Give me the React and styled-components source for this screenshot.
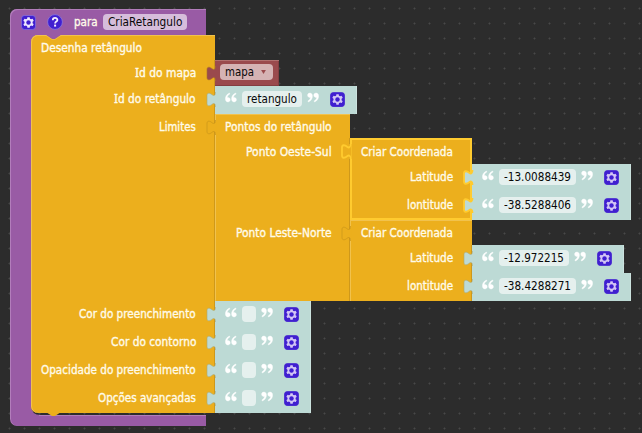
import React, { useLayoutEffect, useRef, useState } from "react";
import styled, { createGlobalStyle, css } from "styled-components";

const PURPLE = "#995ba5";
const AMBER = "#ecaf1d";
const RED = "#9a4a4d";
const MINT = "#bddad5";
const DARK = "#2c2c2c";
const SELECT = "#ffcb2f";

const GlobalStyle = createGlobalStyle`
  body {
    margin: 0;
    overflow: hidden;
    background: ${DARK};
  }
`;

const Workspace = styled.main`
  box-sizing: border-box;
  width: 642px;
  height: 433px;
  padding: 9px 0 0 10px;
  overflow: hidden;
  font: 12.5px/26px "DejaVu Sans Condensed", "DejaVu Sans", sans-serif;
  font-stretch: condensed;
  background: radial-gradient(circle at 9.5px 8.5px, #484848 0.8px, transparent 1.2px) 0 0 / 15px 15px ${DARK};
`;

const Procedure = styled.section`
  display: flex;
  flex-direction: column;
  align-items: flex-start;
`;

const ProcedureHeader = styled.header`
  box-sizing: border-box;
  display: flex;
  align-items: center;
  width: 196px;
  height: 26px;
  padding-left: 11px;
  background: ${PURPLE};
  border-top-left-radius: 7px;
  box-shadow: inset 1px 1px 0 #b27dbb;
`;

const ProcedureBody = styled.div`
  display: flex;
  height: 380px;
`;

const ProcedureArm = styled.div`
  width: 21px;
  background: ${PURPLE};
  box-shadow: inset 1px 0 0 #b27dbb;
`;

const Statement = styled.div`
  position: relative;
  isolation: isolate;
`;

const Notch = styled.svg`
  position: absolute;
  left: 15px;
  ${(p) => (p.$bottom ? "top: 377px;" : "top: 0;")}
  z-index: 1;
`;

const Fillet = styled.svg`
  position: absolute;
  left: 0;
  z-index: -1;
  ${(p) => (p.$bottom ? "bottom: 0;" : "top: 0;")}
`;

const ProcedureFooter = styled.div`
  box-sizing: border-box;
  width: 196px;
  height: 11px;
  background: linear-gradient(#b27dbb, #b27dbb) 29px 0 / 167px 1px no-repeat ${PURPLE};
  border-bottom-left-radius: 7px;
  box-shadow: inset 1px 0 0 #b27dbb;
`;

const TextBox = styled.span`
  display: inline-block;
  width: ${(p) => p.$width}px;
  text-align: left;
  white-space: pre;
  ${(p) => p.$light && "color: #fffbe9; -webkit-text-stroke: 0.35px #fffbe9;"}
`;

const TextRun = styled.span`
  display: inline-block;
  transform-origin: 0 50%;
`;

const SerifCapital = styled.span`
  font-family: "Noto Sans", sans-serif;
  line-height: 1;
`;

const Block = styled.div`
  position: relative;
  display: flex;
  flex-direction: column;
  align-items: flex-start;
`;

const BlockTitle = styled.div`
  box-sizing: border-box;
  width: ${(p) => p.$width}px;
  height: ${(p) => p.$height}px;
  padding: ${(p) => p.$drop ?? 0}px 0 0 ${(p) => p.$indent ?? 10}px;
  background: ${AMBER};
  box-shadow: inset 0 1px 0 #f1c24d, inset 1px 0 0 #f1c24d;
  ${(p) => p.$rounded && "border-top-left-radius: 7px;"}
`;

const InputRow = styled.div`
  display: flex;
`;

const InputLabel = styled.div`
  box-sizing: border-box;
  width: ${(p) => p.$width}px;
  padding: ${(p) => p.$drop ?? 0}px ${(p) => p.$inset ?? 19}px 0 0;
  text-align: right;
  background: ${AMBER};
  box-shadow: inset 1px 0 0 #f1c24d, inset -1px 0 0 #ce981b;
  ${(p) => p.$last && "border-bottom-left-radius: 7px;"}
`;

const Outline = styled.div`
  position: absolute;
  top: 0;
  left: 0;
  width: 122px;
  height: 82px;
  box-sizing: border-box;
  border: 2px solid ${SELECT};
  pointer-events: none;
`;

const TabShape = styled.svg`
  position: absolute;
  left: -9px;
  top: -1px;
  z-index: 2;
`;

const ValueBlock = styled.div`
  position: relative;
  box-sizing: border-box;
  display: flex;
  align-items: center;
  height: ${(p) => p.$height ?? 28}px;
  padding: 0 ${(p) => p.$end ?? 12}px 2px ${(p) => p.$start ?? 10}px;
  background: ${(p) => p.$color};
  ${(p) =>
    p.$color === RED
      ? css`box-shadow: inset 0 1px 0 #b0706f, inset -1px -1px 0 #843e41;`
      : css`box-shadow: inset -1px 0 0 #cbe2de;`}
`;

const Field = styled.span`
  box-sizing: border-box;
  display: flex;
  align-items: center;
  width: ${(p) => p.$width}px;
  height: 16px;
  padding-left: 5px;
  margin: 0 ${(p) => p.$gap ?? 5}px;
  line-height: 16px;
  color: #080808;
  background: ${(p) => p.$tint ?? "#e5f0ee"};
  border-radius: 4px;
`;

const Caret = styled.svg`
  margin-left: auto;
  margin-right: 7px;
`;

const HeaderWord = styled.div`
  margin: 0 5px 0 11px;
`;

const IconSlot = styled.span`
  display: flex;
  margin-left: ${(p) => p.$gap ?? 0}px;
`;

// Squeezes a run of text horizontally so that it fills its slot exactly.
function Text({ width, light, children }) {
  const ref = useRef(null);
  const [scale, setScale] = useState(1);
  useLayoutEffect(() => {
    const natural = ref.current.offsetWidth;
    if (natural) setScale(width / natural);
  }, [width, children]);
  const capital = children.startsWith("I");
  return (
    <TextBox $width={width} $light={light}>
      <TextRun ref={ref} style={{ transform: `scaleX(${scale})` }}>
        {capital && <SerifCapital>I</SerifCapital>}
        {capital ? children.slice(1) : children}
      </TextRun>
    </TextBox>
  );
}

const TAB = "M9.500 7C9.500 10.500 8 11.200 6.200 9.800 3.600 7.600 1 7.600 1 10.500v8C1 21.400 3.600 21.400 6.200 19.200 8 17.800 9.500 18.500 9.500 22";

function Tab({ fill, edge = "#c3901b", selected }) {
  return (
    <TabShape width="11" height="24" viewBox="0 0 11 24">
      <path d={`${TAB}h1V7z`} fill={fill} />
      <path d={TAB} fill="none" stroke={selected ? SELECT : edge} strokeWidth={selected ? 1.8 : 0.6} />
    </TabShape>
  );
}

function Gear({ edge, tint = "#d3c6f5" }) {
  return (
    <svg width="15" height="15" viewBox="0 0 16 16">
      <rect x=".4" y=".4" width="15.2" height="15.2" rx="3.6" fill="#401fd0" stroke={edge ?? "#401fd0"} strokeWidth=".8" />
      <g transform="translate(8 8) scale(1.12) translate(-8 -8)">
        <path
          d="m4.203 7.296 0 1.368-.92.677-.11.41.9 1.559.41.11 1.043-.457 1.187.683.127 1.134.3.3 1.8 0 .3-.299.127-1.138 1.185-.682 1.046.458.409-.11.9-1.559-.11-.41-.92-.677 0-1.366.92-.677.11-.41-.9-1.559-.409-.109-1.046.458-1.185-.682-.127-1.138-.3-.299-1.8 0-.3.3-.126 1.135-1.187.682-1.043-.457-.41.11-.899 1.559.108.409z"
          fill={tint}
        />
        <circle cx="8" cy="8" r="2.1" fill="#401fd0" />
      </g>
    </svg>
  );
}

function Help() {
  return (
    <svg width="16" height="16" viewBox="0 0 16 16">
      <circle cx="8" cy="8" r="7.4" fill="#401fd0" stroke="#8b78dd" strokeWidth=".8" />
      <path d="M5.8 6.3c0-3.2 4.6-2.9 4.6-.4 0 1.7-2.3 1.6-2.3 3.5" fill="none" stroke="#f4efff" strokeWidth="1.8" />
      <rect x="7.1" y="10.6" width="2" height="2" fill="#f4efff" />
    </svg>
  );
}

function Quote({ close }) {
  return (
    <svg width="12" height="16" viewBox="0 0 12 16">
      <g fill="#fff" stroke="#fff" strokeWidth=".4" transform={close ? "rotate(180 6 6.5)" : undefined}>
        <path d="M4.6 2C1.8 3 .2 5.4 .4 8.3c.1 1.6 1.1 2.6 2.5 2.6 1.3 0 2.3-.9 2.3-2.2S4.2 6.5 2.9 6.5c-.3 0-.5.1-.7.2.2-1.5 1-2.7 2.6-3.6z" />
        <path d="M10.8 2C8 3 6.4 5.4 6.6 8.3c.1 1.6 1.1 2.6 2.5 2.6 1.3 0 2.3-.9 2.3-2.2s-1-2.2-2.3-2.2c-.3 0-.5.1-.7.2.2-1.5 1-2.7 2.6-3.6z" />
      </g>
    </svg>
  );
}

function TextValue({ value, width = 14, selected }) {
  return (
    <ValueBlock $color={MINT}>
      <Tab fill={MINT} edge="#a8aa79" selected={selected} />
      <Quote />
      <Field $width={width}>{value && <Text width={width - 10}>{value}</Text>}</Field>
      <Quote close />
      <IconSlot $gap={11}>
        <Gear />
      </IconSlot>
    </ValueBlock>
  );
}

function Input({ label, textWidth, width, inset, drop, last, children }) {
  return (
    <InputRow>
      <InputLabel $width={width} $inset={inset} $drop={drop} $last={last}>
        <Text light width={textWidth}>
          {label}
        </Text>
      </InputLabel>
      {children}
    </InputRow>
  );
}

function Coordinate({ titleHeight, drop, latitude, longitude, latWidth, selected }) {
  return (
    <Block>
      <BlockTitle $width={122} $height={titleHeight} $indent={11} $drop={drop}>
        <Text light width={92}>
          Criar Coordenada
        </Text>
      </BlockTitle>
      <Input label="Latitude" textWidth={43} width={122}>
        <TextValue value={latitude} width={latWidth} selected={selected} />
      </Input>
      <Input label="lontitude" textWidth={46} width={122}>
        <TextValue value={longitude} width={77} selected={selected} />
      </Input>
      {selected && <Outline />}
      <Tab fill={AMBER} selected={selected} />
    </Block>
  );
}

const OPTIONS = [
  { label: "Cor do preenchimento", textWidth: 117 },
  { label: "Cor do contorno", textWidth: 85 },
  { label: "Opacidade do preenchimento", textWidth: 155 },
  { label: "Opções avançadas", textWidth: 98 },
];

export default function App() {
  return (
    <Workspace>
      <GlobalStyle />
      <Procedure>
        <ProcedureHeader>
          <Gear edge="#8b78dd" tint="#eee8ff" />
          <IconSlot $gap={11}>
            <Help />
          </IconSlot>
          <HeaderWord>
            <Text light width={24}>
              para
            </Text>
          </HeaderWord>
          <Field $width={84} $gap={0} $tint="#d6bddb">
            <Text width={74}>CriaRetangulo</Text>
          </Field>
        </ProcedureHeader>
        <ProcedureBody>
          <ProcedureArm />
          <Statement>
            <Fillet width="12" height="12">
              <rect width="12" height="12" fill={PURPLE} />
            </Fillet>
            <Fillet $bottom width="12" height="12">
              <path d="M0 2Q0 12 10 12H0z" fill={PURPLE} />
            </Fillet>
            <Block>
              <BlockTitle $width={184} $height={25} $rounded>
                <Text light width={101}>
                  Desenha retângulo
                </Text>
              </BlockTitle>
              <Input label="Id do mapa" textWidth={61} width={184}>
                <ValueBlock $color={RED} $height={26} $start={5} $end={6}>
                  <Tab fill={RED} edge="#a9702c" />
                  <Field $width={53} $gap={0} $tint="#d5b3b4">
                    <Text width={29}>mapa</Text>
                    <Caret width="5" height="4" viewBox="0 0 6 5">
                      <path d="M0 0h6L3 5z" fill={RED} />
                    </Caret>
                  </Field>
                </ValueBlock>
              </Input>
              <Input label="Id do retângulo" textWidth={82} width={184}>
                <TextValue value="retangulo" width={60} />
              </Input>
              <Input label="Limites" textWidth={37} width={184}>
                <Block>
                  <BlockTitle $width={135} $height={24}>
                    <Text light width={107}>
                      Pontos do retângulo
                    </Text>
                  </BlockTitle>
                  <Input label="Ponto Oeste-Sul" textWidth={86} width={135} inset={18} drop={1}>
                    <Coordinate titleHeight={26} drop={1} latitude="-13.0088439" latWidth={77} longitude="-38.5288406" selected />
                  </Input>
                  <Input label="Ponto Leste-Norte" textWidth={96} width={135} inset={18}>
                    <Coordinate titleHeight={25} latitude="-12.972215" latWidth={70} longitude="-38.4288271" />
                  </Input>
                  <Tab fill={AMBER} />
                </Block>
              </Input>
              {OPTIONS.map(({ label, textWidth }, i) => (
                <Input key={label} label={label} textWidth={textWidth} width={184} last={i === OPTIONS.length - 1}>
                  <TextValue />
                </Input>
              ))}
            </Block>
            <Notch width="15" height="5">
              <path d="M0 0l6 4h3l6-4z" fill={PURPLE} />
              <path d="M0 .5l6 4h3l6-4" fill="none" stroke="#f1c24d" strokeWidth=".7" />
            </Notch>
            <Notch $bottom width="15" height="5">
              <path d="M0 0l6 4h3l6-4z" fill={AMBER} />
            </Notch>
          </Statement>
        </ProcedureBody>
        <ProcedureFooter />
      </Procedure>
    </Workspace>
  );
}
